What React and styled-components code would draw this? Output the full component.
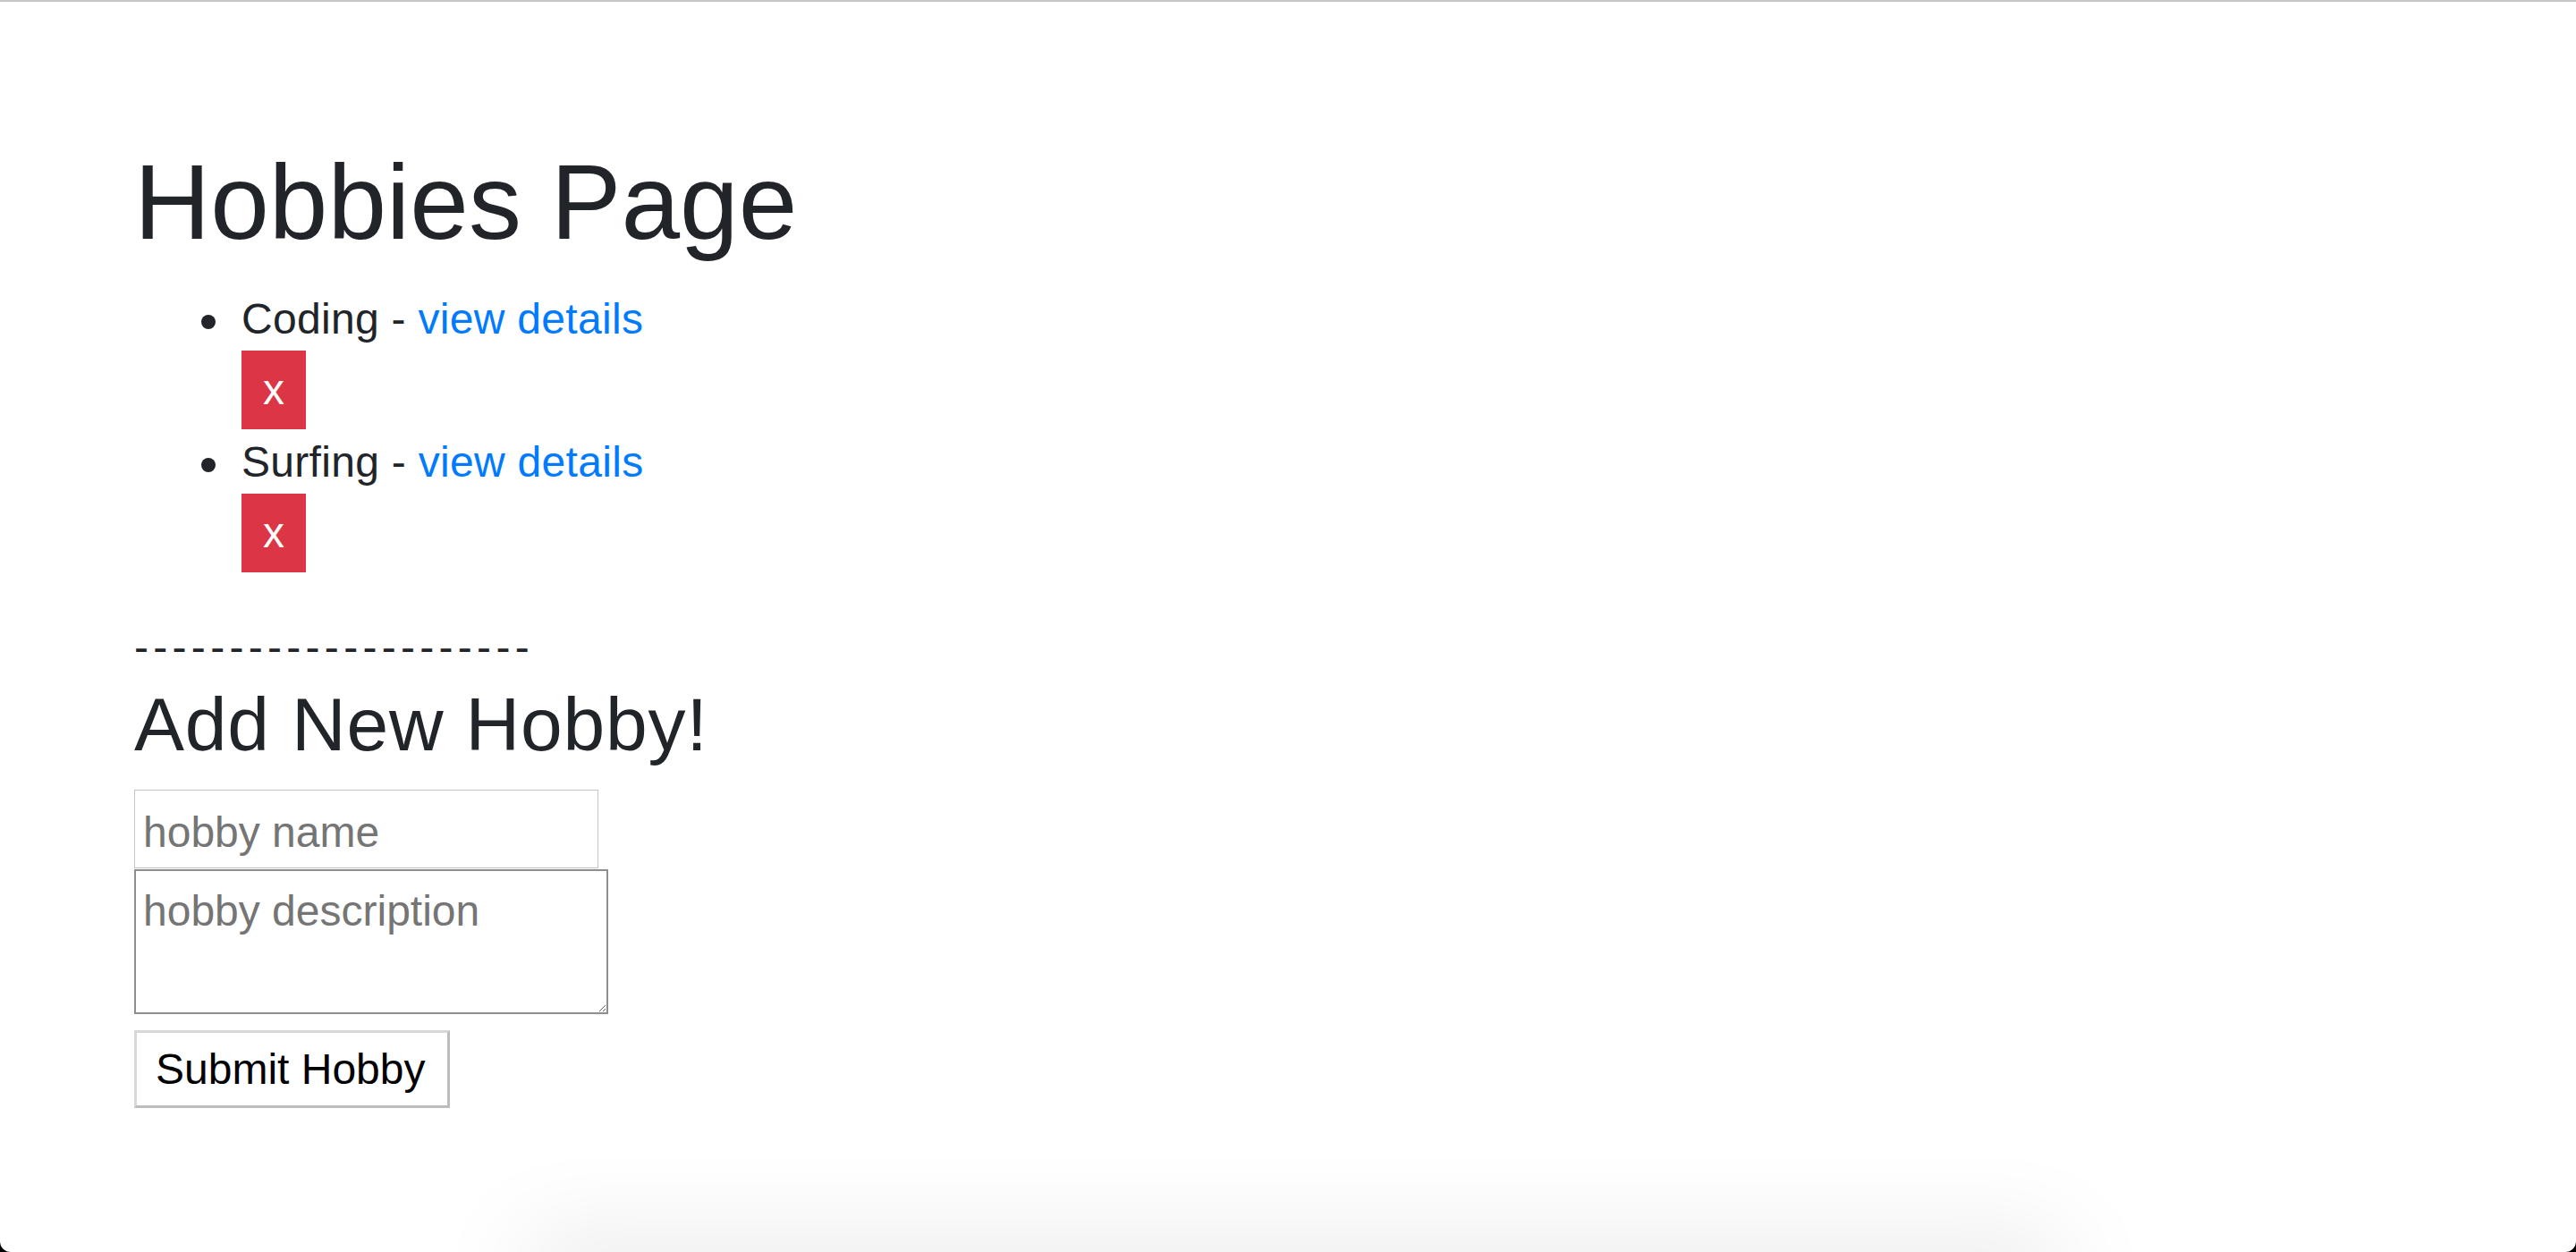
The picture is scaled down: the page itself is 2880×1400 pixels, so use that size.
import React from "react";
import styled, { createGlobalStyle } from "styled-components";

const GlobalStyle = createGlobalStyle`
  html, body {
    margin: 0;
    padding: 0;
    background: #000;
  }
  *, *::before, *::after {
    box-sizing: border-box;
  }
`;

const Frame = styled.div`
  position: relative;
  height: 100vh;
  overflow: hidden;
  background: #fff;
  border-top: 2px solid #c6c6c6;
  border-radius: 0 0 12px 12px;
  font-family: "Liberation Sans", Arial, Helvetica, sans-serif;
  color: #212529;
`;

const Page = styled.main`
  display: flex;
  flex-direction: column;
  align-items: flex-start;
  padding: 152px 0 0 150px;
`;

const Title = styled.h1`
  margin: 0 0 22px;
  font-size: 118px;
  font-weight: 400;
  line-height: 144px;
  color: #212529;
`;

const HobbyList = styled.ul`
  margin: 0 0 48px;
  padding-left: 120px;
  font-size: 48px;
  line-height: 72px;
  letter-spacing: 0.3px;
  list-style: none;
`;

const HobbyItem = styled.li`
  position: relative;
  margin: 0;

  &::before {
    content: "";
    position: absolute;
    left: -45px;
    top: 32px;
    width: 16px;
    height: 16px;
    border-radius: 50%;
    background: #212529;
  }
`;

const ItemLine = styled.div`
  height: 72px;
  padding-top: 1px;
`;

const DetailsLink = styled.a`
  color: #007bff;
  text-decoration: none;
`;

const DeleteButton = styled.button`
  display: block;
  width: 72px;
  height: 88px;
  padding: 0;
  border: none;
  border-radius: 0;
  background: #dc3545;
  color: #fff;
  font-family: inherit;
  font-size: 48px;
  line-height: 88px;
  text-align: center;
  cursor: pointer;
`;

const Divider = styled.div`
  font-size: 48px;
  line-height: 72px;
  letter-spacing: 5.3px;
  color: #212529;
`;

const SubTitle = styled.h3`
  margin: 0 0 23px;
  font-size: 84px;
  font-weight: 400;
  line-height: 100px;
  letter-spacing: 0.8px;
  color: #212529;
`;

const HobbyForm = styled.form`
  display: flex;
  flex-direction: column;
  align-items: flex-start;
`;

const fieldText = `
  font-family: "Liberation Sans", Arial, Helvetica, sans-serif;
  font-size: 48px;
  line-height: 72px;
  color: #212529;
  background: #fff;
  outline: none;
  &::placeholder {
    color: #757575;
    opacity: 1;
  }
`;

const NameInput = styled.input`
  ${fieldText}
  width: 519px;
  height: 88px;
  margin: 0;
  padding: 10px 9px 4px;
  border: 1px solid #c4c4c4;
  border-radius: 0;
`;

const DescriptionInput = styled.textarea`
  ${fieldText}
  width: 530px;
  height: 162px;
  margin: 1px 0 0;
  padding: 9px 8px;
  border: 2px solid #8e8e8e;
  border-radius: 0;
  resize: both;
`;

const SubmitButton = styled.button`
  margin-top: 18px;
  height: 87px;
  padding: 0 25px 0 21px;
  background: #fff;
  color: #000;
  font-family: "Liberation Sans", Arial, Helvetica, sans-serif;
  font-size: 48px;
  line-height: normal;
  border-style: solid;
  border-width: 3px;
  border-color: #d8d8d8 #bdbdbd #bdbdbd #d8d8d8;
  border-radius: 0;
  cursor: pointer;
`;

const BottomShade = styled.div`
  position: absolute;
  left: 590px;
  right: 576px;
  top: 100%;
  height: 40px;
  background: #ddd;
  box-shadow: 0 0 110px rgba(0, 0, 0, 0.17);
  pointer-events: none;
`;

const hobbies = [
  { id: 1, name: "Coding" },
  { id: 2, name: "Surfing" },
];

export default function App() {
  return (
    <>
      <GlobalStyle />
      <Frame>
        <Page>
          <Title>Hobbies Page</Title>
          <HobbyList>
            {hobbies.map((h) => (
              <HobbyItem key={h.id}>
                <ItemLine>
                  {h.name} - <DetailsLink href="#">view details</DetailsLink>
                </ItemLine>
                <DeleteButton type="button">x</DeleteButton>
              </HobbyItem>
            ))}
          </HobbyList>
          <Divider>---------------------</Divider>
          <SubTitle>Add New Hobby!</SubTitle>
          <HobbyForm onSubmit={(e) => e.preventDefault()}>
            <NameInput type="text" placeholder="hobby name" />
            <DescriptionInput placeholder="hobby description" />
            <SubmitButton type="submit">Submit Hobby</SubmitButton>
          </HobbyForm>
        </Page>
        <BottomShade />
      </Frame>
    </>
  );
}
